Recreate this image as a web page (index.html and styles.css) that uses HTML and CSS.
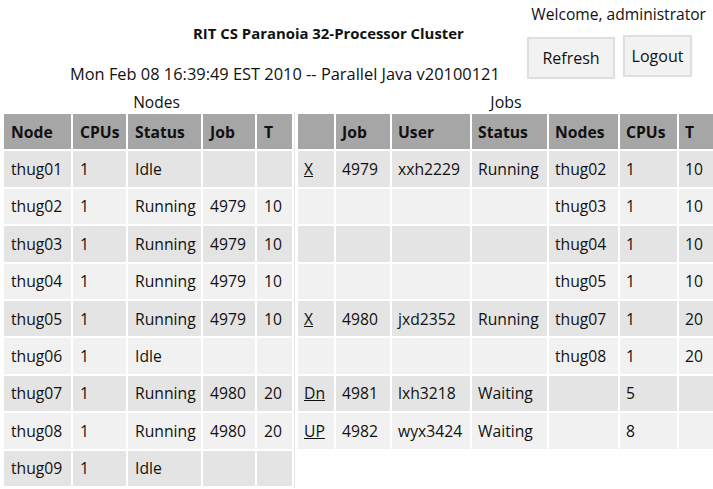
FILE: index.html
```html
<!DOCTYPE html>
<html lang="en">
<head>
<meta charset="utf-8">
<title>RIT CS Paranoia 32-Processor Cluster</title>
<link rel="stylesheet" href="styles.css">
</head>
<body>
<header class="top">
  <div class="titles">
    <h1 class="title">RIT CS Paranoia 32-Processor Cluster</h1>
    <p class="stamp">Mon Feb 08 16:39:49 EST 2010 -- Parallel Java v20100121</p>
  </div>
  <div class="account">
    <div class="welcome">Welcome, administrator</div>
    <div class="actions">
      <button class="btn btn-refresh" type="button">Refresh</button>
      <button class="btn btn-logout" type="button">Logout</button>
    </div>
  </div>
</header>
<main class="panels">
  <section class="panel panel-nodes">
    <div class="caption caption-nodes">Nodes</div>
    <table class="grid nodes">
      <colgroup><col class="w67"><col class="w53"><col class="w73"><col class="w52"><col class="w35"></colgroup>
      <thead><tr><th>Node</th><th>CPUs</th><th>Status</th><th>Job</th><th>T</th></tr></thead>
      <tbody>
        <tr><td>thug01</td><td>1</td><td>Idle</td><td></td><td></td></tr>
        <tr><td>thug02</td><td>1</td><td>Running</td><td>4979</td><td>10</td></tr>
        <tr><td>thug03</td><td>1</td><td>Running</td><td>4979</td><td>10</td></tr>
        <tr><td>thug04</td><td>1</td><td>Running</td><td>4979</td><td>10</td></tr>
        <tr><td>thug05</td><td>1</td><td>Running</td><td>4979</td><td>10</td></tr>
        <tr><td>thug06</td><td>1</td><td>Idle</td><td></td><td></td></tr>
        <tr><td>thug07</td><td>1</td><td>Running</td><td>4980</td><td>20</td></tr>
        <tr><td>thug08</td><td>1</td><td>Running</td><td>4980</td><td>20</td></tr>
        <tr><td>thug09</td><td>1</td><td>Idle</td><td></td><td></td></tr>
      </tbody>
    </table>
  </section>
  <section class="panel panel-jobs">
    <div class="caption">Jobs</div>
    <table class="grid jobs">
      <colgroup><col class="w36"><col class="w54"><col class="w78"><col class="w75"><col class="w69"><col class="w57"><col class="w35"></colgroup>
      <thead><tr><th></th><th>Job</th><th>User</th><th>Status</th><th>Nodes</th><th>CPUs</th><th>T</th></tr></thead>
      <tbody>
        <tr><td><a class="act" href="#">X</a></td><td>4979</td><td>xxh2229</td><td>Running</td><td>thug02</td><td>1</td><td>10</td></tr>
        <tr><td></td><td></td><td></td><td></td><td>thug03</td><td>1</td><td>10</td></tr>
        <tr><td></td><td></td><td></td><td></td><td>thug04</td><td>1</td><td>10</td></tr>
        <tr><td></td><td></td><td></td><td></td><td>thug05</td><td>1</td><td>10</td></tr>
        <tr><td><a class="act" href="#">X</a></td><td>4980</td><td>jxd2352</td><td>Running</td><td>thug07</td><td>1</td><td>20</td></tr>
        <tr><td></td><td></td><td></td><td></td><td>thug08</td><td>1</td><td>20</td></tr>
        <tr><td><a class="act" href="#">Dn</a></td><td>4981</td><td>lxh3218</td><td>Waiting</td><td></td><td>5</td><td></td></tr>
        <tr><td><a class="act" href="#">UP</a></td><td>4982</td><td>wyx3424</td><td>Waiting</td><td></td><td>8</td><td></td></tr>
      </tbody>
    </table>
  </section>
</main>
</body>
</html>
```
FILE: styles.css
```css
html, body {
  margin: 0;
  padding: 0;
  background: #ffffff;
}
body {
  font-family: "Open Sans", "Lato", sans-serif;
  color: #111111;
  width: 713px;
  overflow: hidden;
}
.top {
  display: flex;
  justify-content: space-between;
  height: 92px;
}
.titles {
  display: flex;
  flex-direction: column;
}
.title {
  margin: 22px 0 0 193px;
  font-size: 14.9px;
  font-weight: bold;
  line-height: 22px;
}
.stamp {
  margin: 19px 0 0 70px;
  font-size: 16.4px;
  line-height: 22px;
}
.account {
  display: flex;
  flex-direction: column;
  align-items: flex-end;
  padding-right: 7px;
}
.welcome {
  margin-top: 3px;
  font-size: 15.6px;
  line-height: 22px;
  text-align: right;
}
.actions {
  display: flex;
  gap: 8px;
  align-items: flex-start;
  margin: 10px 14px 0 0;
}
.btn {
  font-family: inherit;
  font-size: 16px;
  color: #111111;
  background: #f2f2f2;
  border: 2px solid #dedede;
  border-radius: 1px;
  box-shadow: 0 0 1px #e6e6e6;
  padding: 0;
  height: 42px;
}
.btn-refresh {
  width: 88px;
  margin-top: 2px;
}
.btn-logout {
  width: 69px;
}
.panels {
  display: flex;
  align-items: flex-start;
  gap: 1px;
  margin-left: 2px;
}
.panel {
  display: flex;
  flex-direction: column;
}
.caption {
  font-size: 16px;
  line-height: 20px;
  height: 20px;
  text-align: center;
}
.caption-nodes {
  font-size: 15.5px;
  padding-left: 16px;
}
.grid {
  border-collapse: separate;
  border-spacing: 2px;
  table-layout: fixed;
  font-size: 15.7px;
}
.nodes {
  width: 293px;
  border-right: 1px solid #e6e6e6;
}
.jobs { width: 418px; }
.grid th, .grid td {
  height: 35.4px;
  padding: 0 0 0 7px;
  text-align: left;
  white-space: nowrap;
  overflow: hidden;
  box-sizing: border-box;
}
.grid th {
  background: #a6a6a6;
  font-weight: bold;
}
.grid tbody tr:nth-child(odd) td { background: #e4e4e4; }
.grid tbody tr:nth-child(even) td { background: #f1f1f1; }
.jobs td, .jobs th { padding-left: 6px; }
.act {
  color: #111111;
  text-decoration: underline;
}
.w67 { width: 67px; }
.w53 { width: 53px; }
.w73 { width: 73px; }
.w52 { width: 52px; }
.w35 { width: 35px; }
.w36 { width: 36px; }
.w54 { width: 54px; }
.w78 { width: 78px; }
.w75 { width: 75px; }
.w69 { width: 69px; }
.w57 { width: 57px; }
```
